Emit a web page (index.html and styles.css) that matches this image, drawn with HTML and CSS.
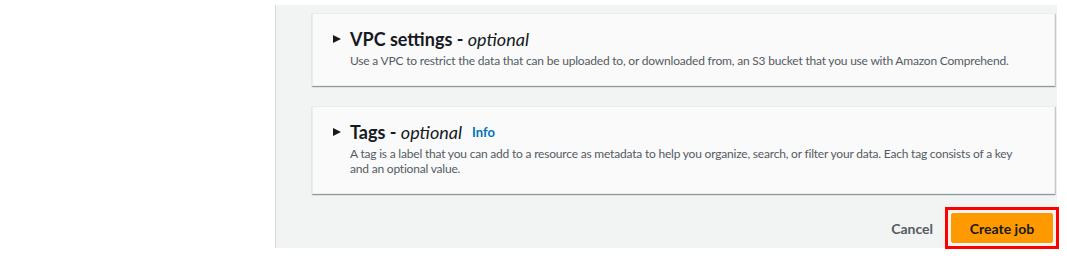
FILE: index.html
```html
<!DOCTYPE html>
<html lang="en">
<head>
  <meta charset="UTF-8">
  <title>Create job</title>
  <link rel="stylesheet" href="styles.css">
</head>
<body>
  <div class="page">
    <main class="panel">
      <section class="card card-vpc">
        <h2 class="card-title">
          <span class="caret"></span>
          <span>VPC settings - <em>optional</em></span>
        </h2>
        <p class="card-desc">Use a VPC to restrict the data that can be uploaded to, or downloaded from, an S3 bucket that you use with Amazon Comprehend.</p>
      </section>

      <section class="card card-tags">
        <h2 class="card-title">
          <span class="caret"></span>
          <span>Tags - <em>optional</em></span>
          <a href="#" class="info">Info</a>
        </h2>
        <p class="card-desc">A tag is a label that you can add to a resource as metadata to help you organize, search, or filter your data. Each tag consists of a key and an optional value.</p>
      </section>

      <div class="actions">
        <button class="btn-link">Cancel</button>
        <span class="highlight">
          <button class="btn-primary">Create job</button>
        </span>
      </div>
    </main>
  </div>
</body>
</html>
```

FILE: styles.css
```css
:root {
  --panel-bg: #f2f3f3;
  --card-bg: #fafafa;
  --text: #16191f;
  --muted: #545b64;
  --link: #0073bb;
  --orange: #ff9900;
  --border: #d5dbdb;
}

* {
  margin: 0;
  padding: 0;
  box-sizing: border-box;
}

body {
  font-family: Lato, "Open Sans", Arial, sans-serif;
  background: #ffffff;
  color: var(--text);
  width: 1067px;
  height: 256px;
  overflow: hidden;
}

.page {
  padding: 5px 10px 0 275px;
}

.panel {
  background: var(--panel-bg);
  border-left: 1px solid var(--border);
  height: 243px;
  padding: 8px 2px 0 36px;
}

.card {
  background: var(--card-bg);
  border: 1px solid #eaeded;
  box-shadow: 0 1px 1px 0 rgba(0, 28, 36, 0.3), 1px 1px 1px 0 rgba(0, 28, 36, 0.15);
  padding: 13px 20px 0 20px;
}

.card-vpc {
  height: 73px;
}

.card-tags {
  height: 88px;
  margin-top: 20px;
}

.card-title {
  display: flex;
  align-items: center;
  font-size: 18px;
  font-weight: 700;
  line-height: 24px;
}

.card-title em {
  font-weight: 400;
  font-style: italic;
}

.caret {
  width: 0;
  height: 0;
  border-top: 4.5px solid transparent;
  border-bottom: 4.5px solid transparent;
  border-left: 8px solid var(--text);
  margin-right: 9px;
}

.info {
  font-size: 13px;
  font-weight: 700;
  color: var(--link);
  text-decoration: none;
  margin-left: 10px;
}

.card-desc {
  font-size: 12px;
  letter-spacing: -0.2px;
  line-height: 15px;
  color: var(--muted);
  margin-top: 2px;
  padding-left: 17px;
  padding-right: 10px;
}

.actions {
  display: flex;
  justify-content: flex-end;
  align-items: center;
  margin-top: 13px;
}

.btn-link {
  background: none;
  border: none;
  font-family: inherit;
  font-size: 14px;
  font-weight: 700;
  color: var(--muted);
  padding: 0 12px;
}

.highlight {
  display: inline-flex;
  border: 3px solid #ff0000;
  padding: 3px;
  margin-right: -4px;
}

.btn-primary {
  background: var(--orange);
  border: 1px solid var(--orange);
  border-radius: 2px;
  font-family: inherit;
  font-size: 14px;
  font-weight: 700;
  color: var(--text);
  width: 102px;
  height: 30px;
}
```
